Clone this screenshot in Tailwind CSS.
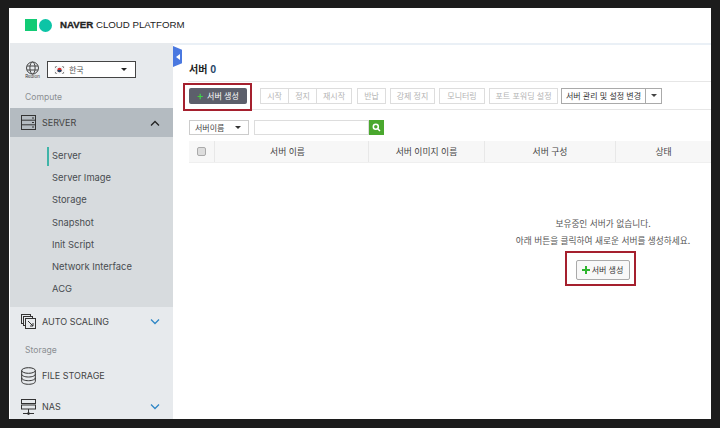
<!DOCTYPE html>
<html lang="ko">
<head>
  <meta charset="UTF-8" />
  <title>NAVER CLOUD PLATFORM</title>
  <script src="https://cdn.jsdelivr.net/npm/@tailwindcss/browser@4"></script>
</head>
<body class="bg-[#1c1c1c] w-[720px] h-[428px] overflow-hidden font-['Noto_Sans','Noto_Sans_CJK_KR',sans-serif]">
<div class="ml-[9px] mt-[8px] w-[702px] h-[411px] bg-white flex flex-col overflow-hidden">

  <!-- header -->
  <header class="h-[35px] shrink-0 flex items-center pl-[16px] gap-[2px]">
    <div class="w-[12px] h-[12px] bg-[#12cb75] mt-[-1px]"></div>
    <div class="w-[13px] h-[13px] rounded-full bg-[#0cc4a6] mt-[-1px]"></div>
    <div class="ml-[6px] text-[9.7px] text-[#222] font-['Liberation_Sans',sans-serif] mt-[-1px]"><b class="font-black [-webkit-text-stroke:0.3px_#222]">NAVER</b> CLOUD PLATFORM</div>
  </header>

  <div class="flex flex-1 min-h-0">
    <!-- sidebar -->
    <aside class="w-[163px] ml-[1px] shrink-0 bg-[#e7eaed] flex flex-col text-[#444] text-[9px] font-['Inter',sans-serif]">
      <div class="h-[47px] flex items-center pl-[14px] pt-[6px] shrink-0">
        <svg class="w-[17px] h-[17px]" viewBox="0 0 17 17" fill="none" stroke="#444" stroke-width="1"><circle cx="8.5" cy="7" r="6"/><ellipse cx="8.5" cy="7" rx="2.6" ry="6"/><path d="M3 5h11M3 9h11"/><text x="8.5" y="16.5" font-size="4.5" fill="#333" stroke="none" text-anchor="middle">Region</text></svg>
        <div class="ml-[6px] w-[89px] h-[17px] border border-[#444] bg-white flex items-center pl-[6px] pr-[8px]">
          <svg class="w-[11px] h-[8px] mr-[4px]" viewBox="0 0 11 8"><rect width="11" height="8" fill="#f6f6f6"/><circle cx="5.5" cy="4" r="2.2" fill="#c33"/><path d="M3.3 4a2.2 2.2 0 0 0 4.4 0z" fill="#246"/><path d="M1 1.5l1.5-1M8.5.5l1.5 1M1 6.5l1.5 1M8.5 7.5l1.500-1" stroke="#222" stroke-width=".8"/></svg>
          <span class="text-[8px] text-[#555] font-['Noto_Sans_CJK_KR',sans-serif]">한국</span>
          <span class="ml-auto w-0 h-0 border-x-[3px] border-x-transparent border-t-[3px] border-t-[#222]"></span>
        </div>
      </div>
      <div class="h-[14px] shrink-0 pl-[15px] flex items-center text-[8.6px] text-[#8b8f93]">Compute</div>

      <div class="h-[29px] mt-[4px] shrink-0 bg-[#b4bbc1] flex items-center pl-[11px] pr-[13px]">
        <svg class="w-[15px] h-[15px]" viewBox="0 0 15 15" fill="none" stroke="#333" stroke-width="1"><rect x=".5" y=".5" width="14" height="14"/><path d="M.5 5.200h14M.5 9.800h14"/><path d="M11 3h2M11 7.500h2M11 12h2"/></svg>
        <span class="ml-[6px] text-[#444]">SERVER</span>
        <svg class="ml-auto w-[10px] h-[6px]" viewBox="0 0 10 6" fill="none" stroke="#222" stroke-width="1.300"><path d="M1 5.500l4-4 4 4"/></svg>
      </div>

      <ul class="h-[170px] shrink-0 bg-[#d7dbde] pt-[8px] text-[#484c50] text-[9.4px]">
        <li class="h-[22.200px] flex items-center pl-[37px] relative"><span class="absolute left-[37px] w-[2px] h-[19px] bg-[#3fb4a8]"></span><span class="pl-[5px]">Server</span></li>
        <li class="h-[22.200px] flex items-center pl-[42px]">Server Image</li>
        <li class="h-[22.200px] flex items-center pl-[42px]">Storage</li>
        <li class="h-[22.200px] flex items-center pl-[42px]">Snapshot</li>
        <li class="h-[22.200px] flex items-center pl-[42px]">Init Script</li>
        <li class="h-[22.200px] flex items-center pl-[42px]">Network Interface</li>
        <li class="h-[22.200px] flex items-center pl-[42px]">ACG</li>
      </ul>

      <div class="h-[29px] shrink-0 flex items-center pl-[11px] pr-[13px]">
        <svg class="w-[15px] h-[15px]" viewBox="0 0 15 15" fill="none" stroke="#333" stroke-width="1"><rect x=".5" y=".5" width="9" height="9"/><rect x="2.500" y="2.500" width="9" height="9" fill="#e7eaed"/><rect x="4.500" y="4.500" width="10" height="10" fill="#e7eaed"/><path d="M7 7l5 5M12 9v3H9"/></svg>
        <span class="ml-[6px]">AUTO SCALING</span>
        <svg class="ml-auto w-[10px] h-[6px]" viewBox="0 0 10 6" fill="none" stroke="#2f86c5" stroke-width="1.300"><path d="M1 .5l4 4 4-4"/></svg>
      </div>
      <div class="h-[28px] shrink-0 pl-[15px] flex items-center text-[8.600px] text-[#8b8f93]">Storage</div>
      <div class="h-[24px] shrink-0 flex items-center pl-[11px] pr-[13px]">
        <svg class="w-[15px] h-[18px]" viewBox="0 0 15 18" fill="none" stroke="#333" stroke-width="1"><ellipse cx="7.500" cy="3.500" rx="6.800" ry="2.800"/><path d="M.7 3.500v11c0 1.600 3 2.800 6.800 2.800s6.800-1.200 6.800-2.800v-11M.7 7.200c0 1.600 3 2.800 6.800 2.800s6.800-1.200 6.800-2.800M.7 10.900c0 1.600 3 2.800 6.800 2.800s6.800-1.200 6.800-2.800"/></svg>
        <span class="ml-[6px]">FILE STORAGE</span>
      </div>
      <div class="h-[38px] shrink-0 flex items-center pl-[11px] pr-[13px]">
        <svg class="w-[15px] h-[16px]" viewBox="0 0 15 16" fill="none" stroke="#333" stroke-width="1"><rect x=".5" y=".5" width="14" height="4"/><rect x=".5" y="6" width="14" height="4"/><path d="M7.500 10v5M2 14.500h11"/><circle cx="7.500" cy="14.500" r="1" fill="#333"/></svg>
        <span class="ml-[6px]">NAS</span>
        <svg class="ml-auto w-[10px] h-[6px]" viewBox="0 0 10 6" fill="none" stroke="#2f86c5" stroke-width="1.300"><path d="M1 .5l4 4 4-4"/></svg>
      </div>
    </aside>

    <!-- content -->
    <main class="flex-1 min-w-0 relative border-t-[2px] border-[#eaf0f6] text-[#444] font-['Noto_Sans_CJK_KR',sans-serif] overflow-hidden">
      <!-- collapse tab -->
      <div class="absolute left-0 top-[1px] w-[9px] h-[21px] bg-[#4a78e0] flex items-center justify-center [clip-path:polygon(0_0,100%_18%,100%_82%,0_100%)]">
        <span class="w-0 h-0 border-y-[3px] border-y-transparent border-r-[4px] border-r-white"></span>
      </div>

      <h1 class="pl-[16px] pt-[16px] h-[36px] text-[10px] font-bold text-[#222] leading-[15px]">서버 <span class="text-[#2a4a6a]">0</span></h1>

      <!-- toolbar -->
      <div class="ml-[15px] h-[29px] border-y border-[#e6e6e6] flex items-center relative">
        <div class="absolute left-[-5px] top-[1px] w-[69px] h-[28px] border-2 border-[#a5202e]"></div>
        <button class="ml-[1px] w-[58px] h-[16px] rounded-[2px] bg-[#5c5f6b] text-white text-[8px] flex items-center justify-center gap-[4px] mt-[1px]">
          <span class="text-[#3fd43f] font-bold text-[10px] leading-none">+</span>서버 생성
        </button>
        <div class="ml-[13px] flex text-[8px] text-[#b4b4b4]">
          <div class="h-[16px] w-[29px] border border-[#ddd] flex items-center justify-center">시작</div>
          <div class="h-[16px] w-[28px] border border-l-0 border-[#ddd] flex items-center justify-center">정지</div>
          <div class="h-[16px] w-[35px] border border-l-0 border-[#ddd] flex items-center justify-center">재시작</div>
          <div class="ml-[5px] h-[16px] w-[29px] border border-[#ddd] flex items-center justify-center">반납</div>
          <div class="ml-[4px] h-[16px] w-[45px] border border-[#ddd] flex items-center justify-center">강제 정지</div>
          <div class="ml-[4px] h-[16px] w-[46px] border border-[#ddd] flex items-center justify-center">모니터링</div>
          <div class="ml-[4px] h-[16px] w-[69px] border border-[#ddd] flex items-center justify-center">포트 포워딩 설정</div>
        </div>
        <div class="ml-[3px] flex h-[16px] border border-[#aaa] text-[8px] text-[#333]">
          <div class="w-[84px] flex items-center justify-center border-r border-[#aaa]">서버 관리 및 설정 변경</div>
          <div class="w-[15px] flex items-center justify-center"><span class="w-0 h-0 border-x-[3px] border-x-transparent border-t-[3px] border-t-[#444]"></span></div>
        </div>
      </div>

      <!-- search -->
      <div class="ml-[16px] mt-[10px] flex h-[15px]">
        <div class="w-[60px] border border-[#ccc] flex items-center pl-[5px] pr-[7px] text-[8px] text-[#444]">서버이름<span class="ml-auto w-0 h-0 border-x-[3px] border-x-transparent border-t-[3px] border-t-[#333]"></span></div>
        <div class="ml-[5px] w-[115px] border border-[#ddd]"></div>
        <div class="w-[15px] bg-[#4aa82e] flex items-center justify-center">
          <svg class="w-[9px] h-[9px]" viewBox="0 0 9 9" fill="none" stroke="#fff" stroke-width="1.500"><circle cx="3.800" cy="3.800" r="2.500"/><path d="M5.700 5.700L8 8"/></svg>
        </div>
      </div>

      <!-- table head -->
      <div class="ml-[16px] mt-[6px] h-[22px] bg-[#f7f7f7] border-b border-[#efefef] flex text-[8.800px] text-[#444]">
        <div class="w-[26px] border-r border-[#e8e8e8] flex items-center justify-center">
          <span class="w-[9px] h-[9px] rounded-[2px] bg-[#ddd] border border-[#aaa]"></span>
        </div>
        <div class="w-[154px] border-r border-[#e8e8e8] flex items-center justify-center pr-[8px] pt-[1px]">서버 이름</div>
        <div class="w-[116px] border-r border-[#e8e8e8] flex items-center justify-center pt-[1px]">서버 이미지 이름</div>
        <div class="w-[131px] border-r border-[#e8e8e8] flex items-center justify-center pt-[1px]">서버 구성</div>
        <div class="flex-1 flex items-center justify-center pt-[1px]">상태</div>
      </div>

      <!-- empty state -->
      <div class="ml-[320px] w-[220px] mt-[52px] flex flex-col items-center text-[8.700px] text-[#555]">
        <p class="h-[17px] leading-[17px]">보유중인 서버가 없습니다.</p>
        <p class="h-[17px] leading-[17px]">아래 버튼을 클릭하여 새로운 서버를 생성하세요.</p>
        <div class="mt-[2px] mr-[6px] w-[71px] h-[35px] border-2 border-[#a5202e] pl-[9px] pt-[7px]">
          <button class="w-[54px] h-[20px] rounded-[2px] border border-[#aaa] bg-[#f8f8f8] text-[8px] text-[#333] flex items-center justify-center gap-[2px]">
            <svg class="w-[8px] h-[8px]" viewBox="0 0 8 8"><path d="M3 0h2v3h3v2H5v3H3V5H0V3h3z" fill="#2fb52f"/></svg>서버 생성
          </button>
        </div>
      </div>
    </main>
  </div>
</div>
</body>
</html>
